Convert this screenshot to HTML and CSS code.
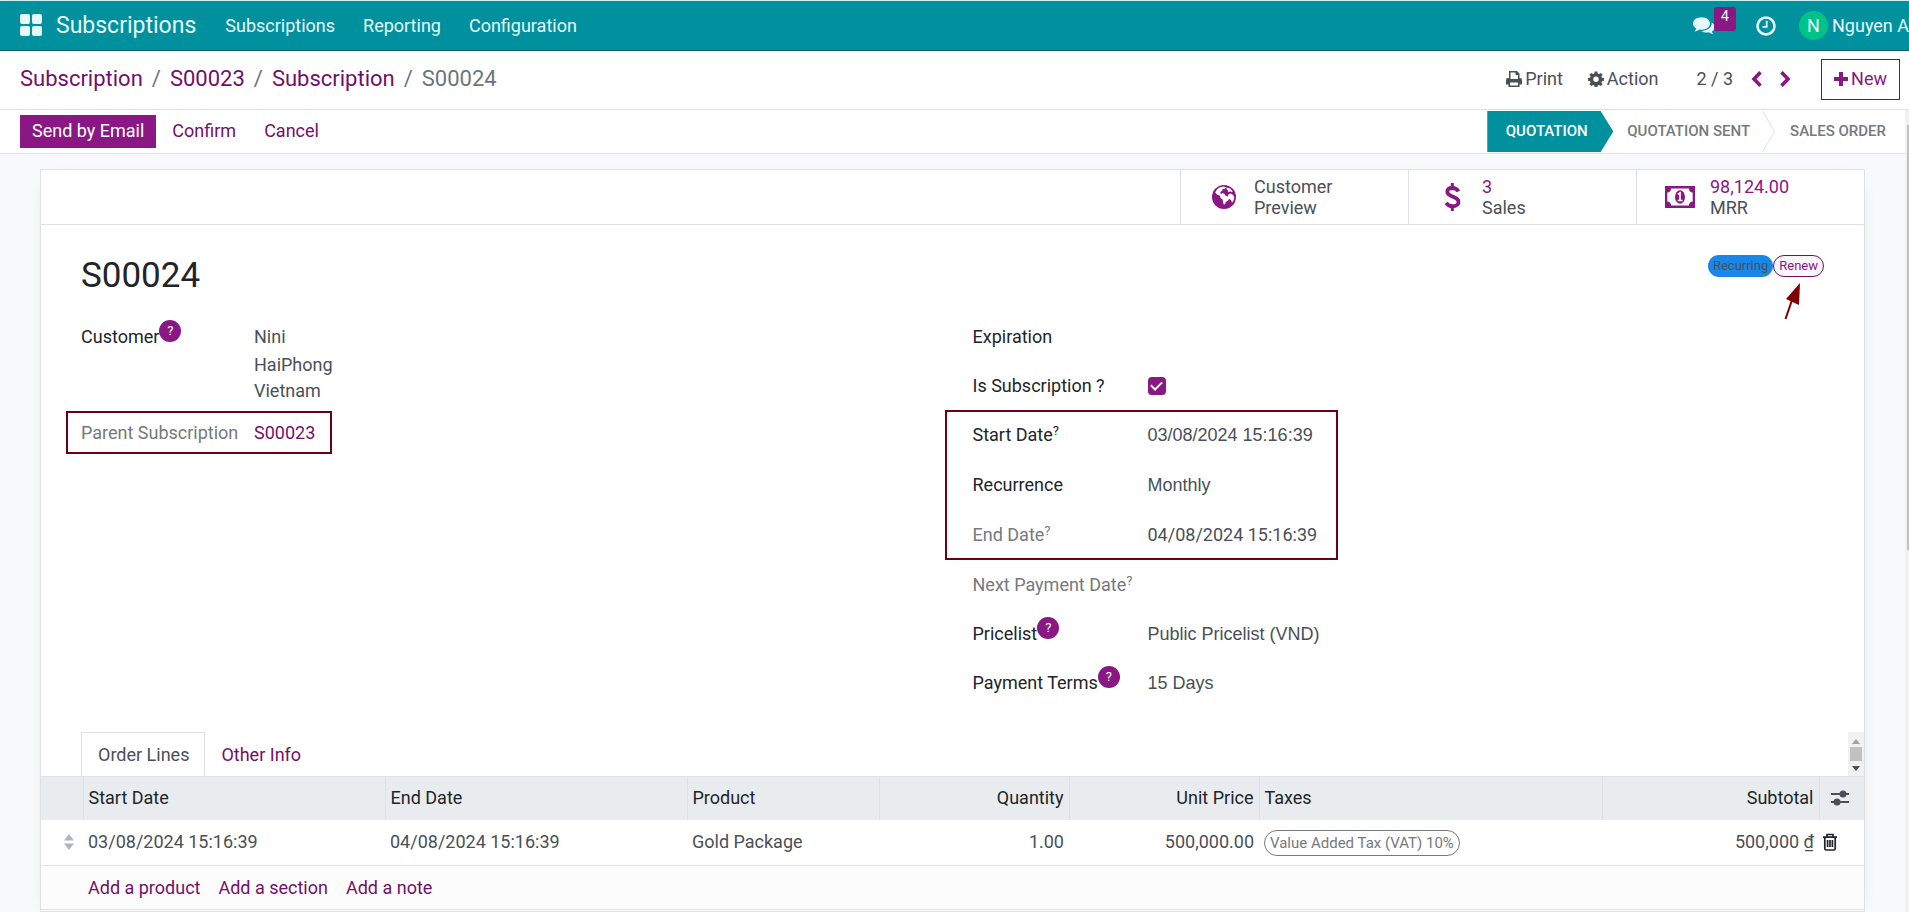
FILE: index.html
```html
<!DOCTYPE html>
<html lang="en">
<head>
<meta charset="utf-8">
<title>S00024 - Subscriptions</title>
<link rel="stylesheet" href="styles.css">
</head>
<body>
<header class="navbar">
  <button class="apps" aria-label="Apps"><svg width="22" height="22" viewBox="0 0 22 22" fill="currentColor"><rect width="10" height="10" rx="2"/><rect x="12" width="10" height="10" rx="2"/><rect y="12" width="10" height="10" rx="2"/><rect x="12" y="12" width="10" height="10" rx="2"/></svg></button>
  <a class="brand" href="#">Subscriptions</a>
  <nav class="menu"><a href="#">Subscriptions</a><a href="#">Reporting</a><a href="#">Configuration</a></nav>
  <div class="systray">
    <button class="chat" aria-label="Messages"><svg width="22" height="18" viewBox="0 0 22 18" fill="currentColor"><path d="M17 6.500C17 10 13.200 12.700 8.600 12.700c-.8 0-1.600-.1-2.300-.2C5 13.500 3.500 14.200 1.500 14.500c.9-.9 1.500-1.900 1.700-3C1.300 10.400 0 8.600 0 6.500 0 3 3.800.2 8.500.2S17 3 17 6.500z"/><path d="M18.500 5.400c2 1 3.300 2.600 3.300 4.500 0 1.800-1.100 3.400-2.900 4.500.2 1.100.8 2 1.600 2.800-1.800-.3-3.300-1-4.500-1.900-3 .5-5.800-.1-7.700-1.400 5.600.1 10.400-3 10.400-7.300z"/></svg><span class="count">4</span></button>
    <button class="clock" aria-label="Activities"><svg width="20" height="20" viewBox="0 0 20 20" fill="none" stroke="currentColor"><circle cx="10" cy="10" r="8.500" stroke-width="2.600"/><path d="M10.700 4.800v6H6.500" stroke-width="1.800"/></svg></button>
    <button class="user"><span class="avatar">N</span><span>Nguyen A</span></button>
  </div>
</header>

<div class="control">
  <nav class="crumbs" aria-label="Breadcrumb"><a href="#">Subscription</a><i>/</i><a href="#">S00023</a><i>/</i><a href="#">Subscription</a><i>/</i><span>S00024</span></nav>
  <div class="tools">
    <button class="tool"><svg width="16" height="16" viewBox="0 0 16 16" fill="currentColor"><path fill-rule="evenodd" d="M3 0h8l2.500 2.500V7H14a2 2 0 0 1 2 2v4.500h-2.500V16h-11v-2.500H0V9a2 2 0 0 1 2-2h1zM4.500 1.500V8h7.500V4H9.500V1.500zM4 11.500v3h8v-3z"/></svg>Print</button>
    <button class="tool action"><svg width="16" height="16" viewBox="0 0 16 16" fill="currentColor"><path fill-rule="evenodd" d="M6.700.5h2.600l.4 2 1.300.6 1.800-1.200 1.800 1.800-1.200 1.800.6 1.300 2 .3v2.700l-2 .4-.6 1.300 1.200 1.700-1.800 1.900-1.800-1.200-1.300.5-.4 2.100H6.700l-.4-2.100-1.300-.5-1.800 1.200-1.800-1.900 1.200-1.700-.6-1.300-2-.4V7.100l2-.3.6-1.300L1.400 3.700l1.800-1.800L5 3.100l1.300-.6zM8 5.600a2.700 2.700 0 1 0 0 5.400a2.700 2.700 0 0 0 0-5.400z"/></svg>Action</button>
    <span class="pager">2 / 3</span>
    <button class="arrow prev" aria-label="Previous"><svg width="11" height="16" viewBox="0 0 11 16" fill="none" stroke="currentColor" stroke-width="3.600"><path d="M9.500 1.300L3 8l6.500 6.700"/></svg></button>
    <button class="arrow" aria-label="Next"><svg width="11" height="16" viewBox="0 0 11 16" fill="none" stroke="currentColor" stroke-width="3.600"><path d="M1.500 1.300L8 8l-6.500 6.700"/></svg></button>
    <button class="new"><svg width="14" height="14" viewBox="0 0 14 14" fill="none" stroke="currentColor" stroke-width="4"><path d="M7 0v14M0 7h14"/></svg>New</button>
  </div>
</div>

<div class="view">
<div class="statusbar">
  <div class="actions"><button class="primary">Send by Email</button><button>Confirm</button><button>Cancel</button></div>
  <div class="stages">
    <button class="stage current">Quotation</button>
    <button class="stage">Quotation Sent<svg class="chevron" width="13" height="41" viewBox="0 0 13 41" fill="none" stroke="#dee2e6"><path d="M.5 0l12 20.500L.5 41"/></svg></button>
    <button class="stage">Sales Order</button>
  </div>
</div>

<main class="content">
  <div class="sheet">
    <div class="stats">
      <button class="stat"><svg width="24" height="24" viewBox="0 0 24 24"><circle cx="12" cy="12" r="12" fill="#8a1783"/><path fill="#fff" d="M5 4.200l3-1.900 3.500-.8 2.500.8-1.200 1.500-2.300.3-.2 1.700-1.500.6-.8 1.800 1.500.5 1.200-.8 1.900 1 .7 1.700 2.800 1.200 1.200 1.800-1.500 2.200-2 1.200-.8 2.200-1.200.3-.9-2.500-.1-2.200-2.200-1.900-.7-2.200L5 9.500 3.200 7.500zM14.500 2.400l3.700 1.200 2.600 3-1.300.3-1.200-.7-1.500.9-1-.3.500-1.300-1.700-1.200zM16.500 9.200l2.500-.6 2 1.300 1.200 2-.4 3.200-1.800 2.600-.9-2.500-2.400-1.700-1-2.200z"/></svg><span>Customer<br>Preview</span></button>
      <button class="stat"><svg width="24" height="30" viewBox="0 0 24 30" fill="none" stroke="#8a1783" stroke-width="3.800"><path d="M18.300 9.500C17.200 7.200 15 6 12.200 6c-3 0-4.900 1.400-4.900 3.700 0 5.900 11.200 3.900 11.200 10.200 0 2.600-2.500 4.300-5.800 4.300-2.900 0-5-1.200-6.600-3.400"/><path d="M12.300 1v5M12.300 24v5" stroke-width="3"/></svg><span><b>3</b><br>Sales</span></button>
      <button class="stat"><svg width="30" height="22" viewBox="0 0 30 22"><path fill="#8a1783" fill-rule="evenodd" d="M0 0h30v22H0zM6 2.500A4 4 0 0 1 2.300 6.500v9A4 4 0 0 1 6 19.500h18a4 4 0 0 1 3.700-4v-9A4 4 0 0 1 24 2.500z"/><ellipse cx="15" cy="11" rx="5" ry="6.800" fill="#8a1783"/><path d="M12.800 8.300L15 7v7.500M12.700 14.500h4.800" fill="none" stroke="#fff" stroke-width="1.700"/></svg><span><b>98,124.00</b><br>MRR</span></button>
    </div>

    <div class="form">
      <div class="heading">
        <h1>S00024</h1>
        <div class="tags"><span class="tag recurring">Recurring</span><span class="tag renew">Renew</span>
          <svg class="pointer" width="20" height="38" viewBox="0 0 20 38"><path d="M1.500 36L8 17" stroke="#7d0000" stroke-width="2"/><path d="M16 0L2 16l13 6z" fill="#7d0000"/></svg>
        </div>
      </div>
      <div class="groups">
        <dl class="group left">
          <div class="field customer"><dt>Customer<button class="help">?</button></dt><dd>Nini<br><span class="address">HaiPhong<br>Vietnam</span></dd></div>
          <div class="field parent"><dt class="muted">Parent Subscription</dt><dd><a href="#">S00023</a></dd></div>
        </dl>
        <dl class="group right">
          <div class="field"><dt>Expiration</dt><dd></dd></div>
          <div class="field"><dt><label for="is-sub">Is Subscription ?</label></dt><dd><input type="checkbox" id="is-sub" checked></dd></div>
          <div class="dates">
            <div class="field"><dt>Start Date<sup>?</sup></dt><dd class="value">03/08/2024 15:16:39</dd></div>
            <div class="field"><dt>Recurrence</dt><dd class="value">Monthly</dd></div>
            <div class="field"><dt class="muted">End Date<sup>?</sup></dt><dd>04/08/2024 15:16:39</dd></div>
          </div>
          <div class="field"><dt class="muted">Next Payment Date<sup>?</sup></dt><dd></dd></div>
          <div class="field"><dt>Pricelist<button class="help">?</button></dt><dd class="value">Public Pricelist (VND)</dd></div>
          <div class="field"><dt>Payment Terms<button class="help">?</button></dt><dd class="value">15 Days</dd></div>
        </dl>
      </div>
    </div>

    <div class="tabs">
      <button class="tab active">Order Lines</button><button class="tab">Other Info</button>
      <div class="scroller"><svg width="16" height="44" viewBox="0 0 16 44"><path fill="#a3a3a3" d="M4 12h8L8 7z"/><path fill="#c1c1c1" d="M2 15h12v14H2z"/><path fill="#505050" d="M4 34h8l-4 5z"/></svg></div>
    </div>

    <table class="lines">
      <colgroup><col class="c-handle"><col class="c-date"><col class="c-date"><col class="c-product"><col class="c-num"><col class="c-num"><col class="c-tax"><col><col class="c-opt"></colgroup>
      <thead><tr><th></th><th>Start Date</th><th>End Date</th><th>Product</th><th class="num">Quantity</th><th class="num">Unit Price</th><th>Taxes</th><th class="num">Subtotal</th><th class="opt"><button aria-label="Columns"><svg width="18" height="16" viewBox="0 0 18 16" fill="#495057"><path d="M0 3h18v2H0zM0 11h18v2H0z"/><circle cx="12" cy="4" r="3.500"/><circle cx="6" cy="12" r="3.500"/></svg></button></th></tr></thead>
      <tbody>
        <tr><td class="handle"><svg width="10" height="16" viewBox="0 0 10 16" fill="#adb5bd"><path d="M0 6.500h10L5 0zM0 9.500h10L5 16z"/></svg></td><td>03/08/2024 15:16:39</td><td>04/08/2024 15:16:39</td><td>Gold Package</td><td class="num">1.00</td><td class="num">500,000.00</td><td><span class="tax">Value Added Tax (VAT) 10%</span></td><td class="num">500,000 ₫</td><td class="del"><button aria-label="Delete"><svg width="14" height="18" viewBox="0 0 14 18" fill="none" stroke="#212529" stroke-width="1.700"><path d="M0 4.200h14M4 4V1.500h6V4M1.800 4.500v11q0 1.500 1.400 1.500h7.600q1.400 0 1.400-1.500v-11M4.600 7v7M7 7v7M9.400 7v7"/></svg></button></td></tr>
        <tr class="add"><td></td><td colspan="8"><a href="#">Add a product</a><a href="#">Add a section</a><a href="#">Add a note</a></td></tr>
      </tbody>
    </table>
  </div>
</main>
<div class="track"><div class="thumb"></div></div>
</div>
</body>
</html>
```
FILE: styles.css
```css
* { box-sizing: border-box; }
body { margin: 0; height: 100vh; overflow: hidden; display: flex; flex-direction: column; font: 18px/26px Roboto, "Liberation Sans", sans-serif; color: #495057; background: #fff; }
button { font: inherit; color: inherit; background: none; border: 0; padding: 0; margin: 0; white-space: nowrap; }
a { color: #71106b; text-decoration: none; }
svg { display: block; flex: none; }

.navbar { flex: none; height: 51px; padding-left: 20px; display: flex; align-items: center; background: #00909e; border-top: 1px solid #c9f2f5; border-bottom: 1px solid #0b5f6a; color: #e6f9fa; }
.navbar a { color: inherit; }
.apps { padding-bottom: 2px; }
.brand { font-size: 23px; margin-left: 14px; }
.menu { display: flex; gap: 28px; margin-left: 29px; }
.systray { display: flex; align-items: center; margin-left: auto; }
.chat { position: relative; margin-right: 41px; }
.count { position: absolute; left: 21px; top: -10px; width: 22px; height: 24px; border-radius: 3px; background: #8a1783; font-size: 14px; line-height: 18px; text-align: center; }
.clock { margin-right: 23px; }
.user { display: flex; align-items: center; gap: 4px; }
.avatar { width: 29px; height: 29px; border-radius: 50%; background: #00c389; line-height: 29px; text-align: center; }

.control { flex: none; height: 59px; padding: 0 9px 2px 20px; display: flex; align-items: center; justify-content: space-between; border-bottom: 1px solid #dee2e6; }
.crumbs { display: flex; gap: 9px; font-size: 22px; color: #6c757d; }
.crumbs i { font-style: normal; }
.tools { display: flex; align-items: center; }
.tool { display: flex; align-items: center; gap: 3px; }
.action { margin-left: 25px; }
.pager { margin: 0 18px 0 38px; }
.arrow { color: #8a1783; }
.prev { margin-right: 18px; }
.new { display: flex; align-items: center; gap: 3px; height: 41px; padding: 0 12px; margin-left: 30px; border: 1px solid #71106b; color: #8a1783; }

.view { position: relative; flex: 1; min-height: 0; display: flex; flex-direction: column; }
.statusbar { flex: none; height: 44px; padding: 0 8px 0 20px; display: flex; justify-content: space-between; align-items: center; border-bottom: 1px solid #dee2e6; }
.actions { display: flex; gap: 4px; color: #71106b; }
.actions button { height: 33px; padding: 0 12px 2px; }
.actions .primary { background: #8a1783; color: #fff; }
.stages { display: flex; height: 41px; }
.stage { position: relative; padding: 0 14px 2px; font-size: 15px; font-weight: 500; text-transform: uppercase; color: #76797d; }
.stage.current { width: 126px; padding: 0 25px 2px 18px; background: #00909e; color: #fff; clip-path: polygon(0 0, 90% 0, 100% 50%, 90% 100%, 0 100%); }
.chevron { position: absolute; right: -11px; top: 0; }
.stage:last-child { padding: 0 15px 2px 26px; }

.content { flex: 1; min-height: 0; overflow: hidden; padding: 15px 44px 0 40px; background: #f8f9fa; }
.track { position: absolute; top: 0; bottom: 0; right: 0; width: 4px; padding: 15px 0 0 2px; background: #f1f1f1; }
.thumb { height: 54%; background: #c1c1c1; }
.sheet { min-height: 100%; background: #fff; border: 1px solid #dee2e6; box-shadow: 0 5px 20px -15px rgba(0, 0, 0, .4); }
.stats { display: flex; justify-content: flex-end; height: 55px; border-bottom: 1px solid #dee2e6; }
.stat { display: flex; align-items: center; width: 228px; padding-left: 28px; border-left: 1px solid #dee2e6; text-align: left; line-height: 21px; }
.stat svg { width: 30px; margin-right: 15px; }
.stat b { font-weight: 400; color: #8a1783; }

.form { padding: 28px 40px 0; }
.heading { display: flex; justify-content: space-between; }
h1 { margin: 0; font-size: 35px; line-height: 46px; font-weight: 400; color: #212529; }
.tags { position: relative; display: flex; align-items: flex-start; padding-top: 2px; }
.tag { height: 22px; padding: 0 5px; border-radius: 11px; font-size: 13px; line-height: 22px; }
.recurring { background: #1a87e8; color: #495057; }
.renew { border: 1px solid #71106b; color: #8a1783; line-height: 20px; background: #f8f5fb; }
.pointer { position: absolute; right: 20px; top: 30px; }
.groups { display: grid; grid-template-columns: 1fr 1fr; padding-top: 13px; }
.group { margin: 0; }
.right { padding-left: 20px; }
.field { display: grid; grid-template-columns: 175px 1fr; height: 49px; align-items: center; }
.left .field { grid-template-columns: 173px 1fr; }
dt { color: #212529; white-space: nowrap; }
dd { margin: 0; }
.muted { color: #76797d; }
.value { font-family: "Liberation Sans", Arial, sans-serif; }
.customer.field { height: auto; align-items: start; padding-top: 12px; }
.address { display: block; padding-top: 2px; }
.parent.field { width: 266px; height: 43px; margin: 7px 0 0 -15px; padding-left: 13px; border: 2px solid #6b0010; }
.dates { width: 393px; margin-left: -28px; padding-left: 28px; outline: 2px solid #6b0010; outline-offset: -2px; }
.dates .field { height: 50px; }
.help { width: 22px; height: 22px; border-radius: 50%; background: #8a1783; color: #fff; font-size: 13px; line-height: 22px; vertical-align: 8px; margin: -8px 0; }
sup { font-size: 13px; line-height: 0; vertical-align: 6px; }
input[type="checkbox"] { appearance: none; display: grid; place-items: center; width: 18px; height: 18px; margin: 0; border-radius: 4px; background: #8a1783; }
input[type="checkbox"]:checked::before { content: ""; width: 5px; height: 9px; margin-bottom: 3px; border: solid #fff; border-width: 0 2px 2px 0; transform: rotate(45deg); }

.tabs { display: flex; height: 44px; padding-left: 40px; margin-top: 25px; }
.tab { padding: 1px 16px 0; color: #71106b; }
.tab.active { padding: 0 15px 0 16px; border: 1px solid #dee2e6; border-bottom: 0; color: #495057; }
.scroller { margin-left: auto; background: #f1f1f1; }

.lines { width: 100%; table-layout: fixed; border-collapse: collapse; }
.c-handle { width: 42px; }
.c-date { width: 302px; }
.c-product { width: 192px; }
.c-num { width: 190px; }
.c-tax { width: 343px; }
.c-opt { width: 45px; }
th, td { padding: 0 5px; text-align: left; font-weight: 400; white-space: nowrap; }
th { height: 43px; background: #e9ecef; color: #212529; border-left: 1px solid #dee2e6; border-top: 1px solid #dee2e6; }
th:first-child { border-left: 0; }
td { height: 46px; border-bottom: 1px solid #dee2e6; }
.num { text-align: right; }
td button, th button { display: block; }
th.opt { padding: 0 0 0 11px; }
td.handle { padding: 0 9px 0 23px; }
td.del { padding: 0 0 0 4px; }
.tax { display: inline-block; padding: 0 5px; border: 1px solid #76797d; border-radius: 13px; font-size: 15px; line-height: 24px; color: #76797d; vertical-align: middle; }
.add td { height: 44px; background: #fcfcfc; }
.add a { margin-right: 18px; }
```
